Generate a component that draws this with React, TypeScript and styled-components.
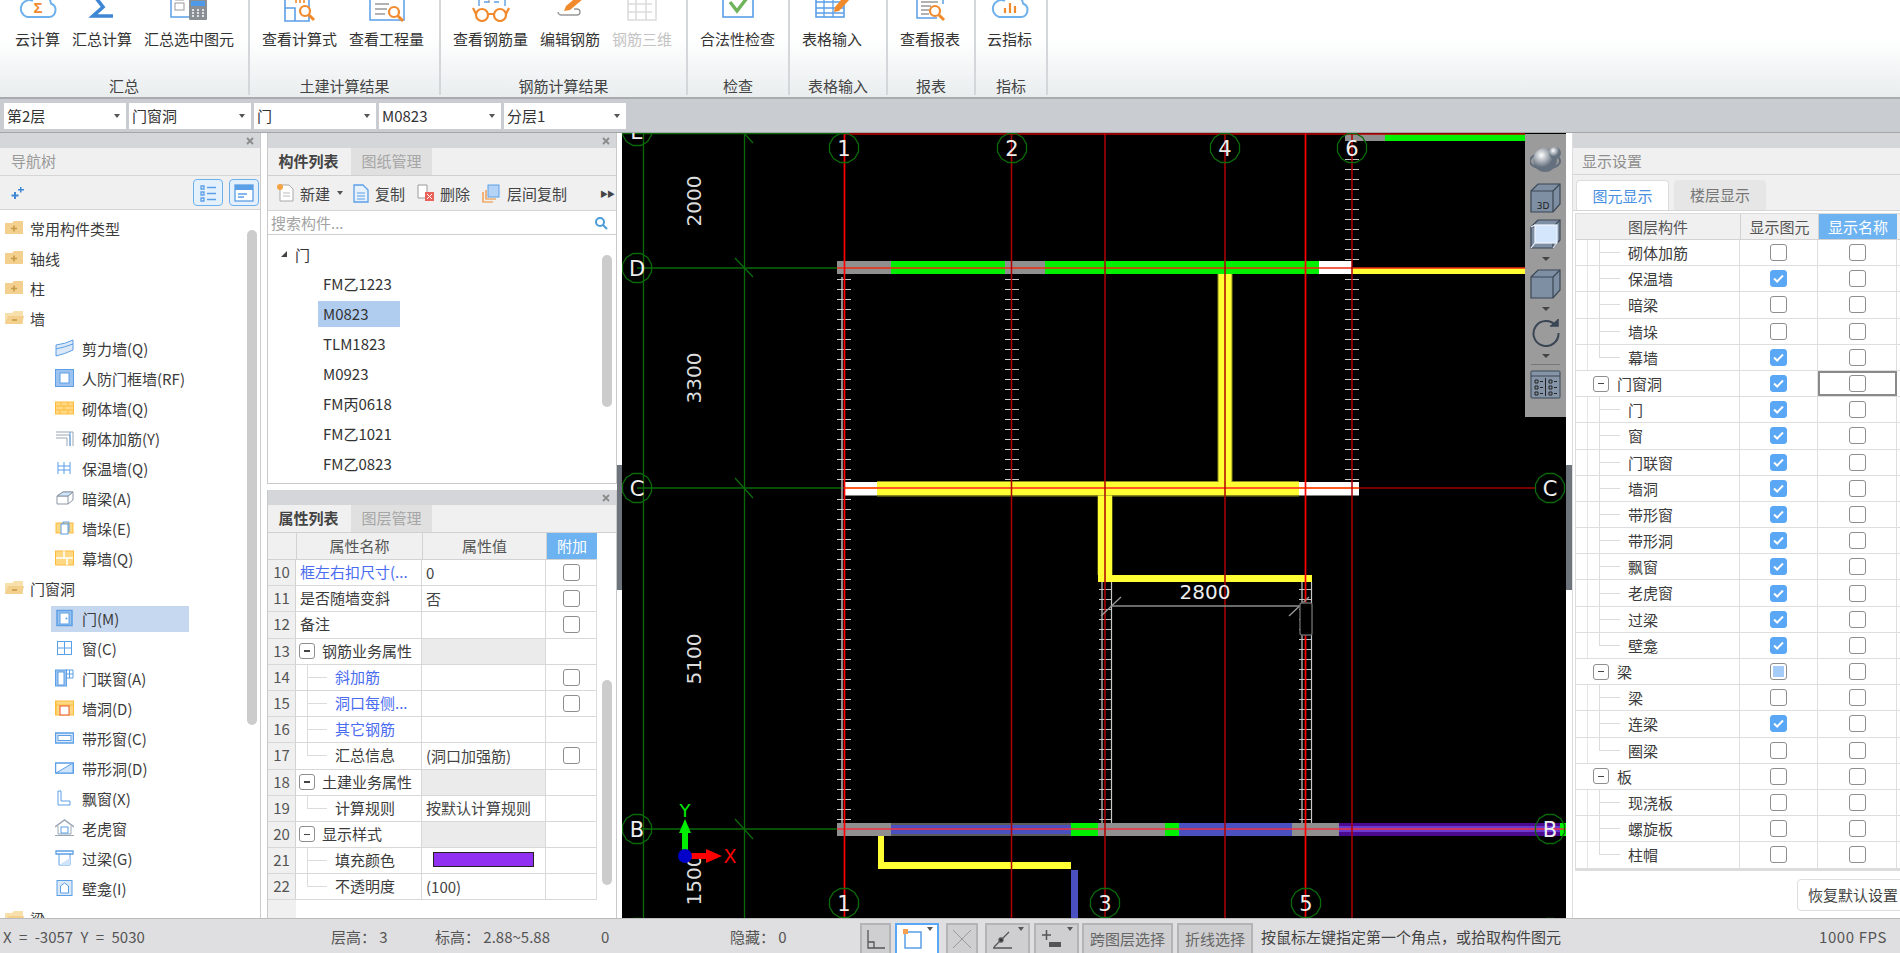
import React from "react";
import styled, { createGlobalStyle } from "styled-components";

const Global = createGlobalStyle`
  html, body { margin: 0; padding: 0; background: #fff; overflow: hidden; }
  body { font-family: "Noto Sans CJK SC", "Noto Sans", sans-serif; font-size: 15px; color: #333; }
  * { box-sizing: border-box; }
`;

const Page = styled.div`
  width: 1900px; height: 953px; display: flex; flex-direction: column; overflow: hidden; background: #fff;
`;

/* ---------- ribbon ---------- */
const Ribbon = styled.div`
  height: 99px; flex: none; display: flex; border-bottom: 2px solid #a9acaf;
  background: linear-gradient(#fff 0, #fff 38px, #e9edee 97px);
`;
const Section = styled.div<{ $w: number }>`
  width: ${p => p.$w}px; height: 95px; flex: none; display: grid; grid-template-rows: 77px 18px;
  border-right: 2px solid #d3d7d9;
`;
const Items = styled.div<{ $pad: number }>`
  display: flex; gap: 12px; padding-left: ${p => p.$pad}px;
`;
const Item = styled.div<{ $off?: boolean }>`
  display: flex; flex-direction: column; align-items: center; color: ${p => (p.$off ? "#c4c4c4" : "#333")};
`;
const IconZone = styled.div`
  height: 22px; width: 40px; overflow: hidden; display: flex; align-items: flex-end; justify-content: center; margin-bottom: 8px;
`;
const ItemLabel = styled.div`
  line-height: 18px; white-space: nowrap;
`;
const SectionTitle = styled.div`
  text-align: center; line-height: 18px; color: #444;
`;

/* ---------- selector bar ---------- */
const SelectBar = styled.div`
  height: 34px; flex: none; display: flex; gap: 3px; padding: 4px 0 0 4px; background: #c9ccd1;
  border-bottom: 1px solid #a4a6a9;
`;
const Select = styled.div`
  width: 122px; height: 26px; background: #fff; display: flex; align-items: center; justify-content: space-between;
  padding: 0 6px 0 3px; color: #333; line-height: 26px;
`;
const Caret = styled.span<{ $ml?: number }>`
  width: 0; height: 0; margin-left: ${p => p.$ml ?? 0}px; border-left: 3.5px solid transparent; border-right: 3.5px solid transparent; border-top: 4px solid #555;
`;

/* ---------- main ---------- */
const Main = styled.div`
  height: 785px; flex: none; display: flex;
`;
const Strip = styled.div`
  height: 15px; flex: none; background: #d5d6da; display: flex; justify-content: flex-end; align-items: center;
  padding-right: 5px;
`;
const CloseX = () => (
  <svg width="10" height="10" viewBox="0 0 10 10" fill="none" stroke="#8b8b8b" strokeWidth="1.800"><path d="M2 2L8 8M8 2L2 8" /></svg>
);
const LeftPanel = styled.div`
  width: 261px; flex: none; display: flex; flex-direction: column; border-right: 1px solid #ccc;
`;
const Title = styled.div`
  height: 28px; flex: none; background: #f0f0f0; color: #9a9a9a; padding-left: 11px; line-height: 26px; border-bottom: 1px solid #d5d5d5;
`;
const NavTools = styled.div`
  height: 34px; flex: none; background: #f0f0f0; display: flex; align-items: center; gap: 6px; padding: 0 1px 0 9px;
  border-bottom: 1px solid #d5d5d5;
`;
const Spacer = styled.div`
  flex: 1;
`;
const ToggleBtn = styled.div`
  width: 30px; height: 27px; background: #e4f1fd; border: 1px solid #6db0ee; border-radius: 4px; display: flex; align-items: center; justify-content: center;
`;
const NavTree = styled.div`
  flex: 1; position: relative; overflow: hidden; padding-top: 3px;
`;
const NavThumb = styled.div`
  position: absolute; left: 247px; top: 20px; width: 10px; height: 495px; background: #ccc; border-radius: 5px;
`;
const NavRow = styled.div<{ $child?: boolean }>`
  height: 30px; display: flex; align-items: center; padding-left: ${p => (p.$child ? 55 : 5)}px; gap: ${p => (p.$child ? 8 : 6)}px; color: #3c3c3c; white-space: nowrap;
`;
const NavSel = styled.div`
  position: absolute; left: 51px; top: 396px; width: 138px; height: 26px; background: #c6d8ef;
`;
const NavIconBox = styled.span`
  width: 19px; height: 18px; flex: none; display: flex; position: relative;
`;
const NavText = styled.span`
  position: relative;
`;
const Gap = styled.div<{ $w: number }>`
  width: ${p => p.$w}px; flex: none; background: #fff; position: relative;
`;
const Handle = styled.div`
  position: absolute; left: 0; right: 0; top: 332px; height: 125px; background: #6d747c;
`;
const MiddleCol = styled.div`
  width: 350px; flex: none; display: flex; flex-direction: column;
`;
const ListPanel = styled.div`
  height: 351px; flex: none; display: flex; flex-direction: column; border: 1px solid #c9c9c9; border-top: 0;
`;
const Divider = styled.div`
  height: 6px; flex: none; background: #fff;
`;
const PropPanel = styled.div`
  flex: 1; display: flex; flex-direction: column; border-right: 1px solid #c9c9c9; border-left: 1px solid #c9c9c9; position: relative; overflow: hidden;
`;
const TabBar = styled.div`
  height: 28px; flex: none; background: #f0f0f0; display: flex; border-bottom: 1px solid #d0d0d0;
`;
const Tab = styled.div<{ $on?: boolean }>`
  width: 81px; margin-right: 2px; text-align: center; line-height: 26px; font-weight: ${p => (p.$on ? 700 : 400)};
  color: ${p => (p.$on ? "#444" : "#a6a6a6")}; background: ${p => (p.$on ? "#f0f0f0" : "#e0e0e0")};
`;
const ListTools = styled.div`
  height: 35px; flex: none; background: #f0f0f0; display: flex; align-items: center; padding-left: 9px; border-bottom: 1px solid #d5d5d5; color: #444;
`;
const ToolText = styled.span<{ $ml: number; $w: number }>`
  margin-left: ${p => p.$ml}px; width: ${p => p.$w}px; flex: none; white-space: nowrap;
`;
const ToolIcon = styled.span<{ $ml: number }>`
  margin-left: ${p => p.$ml}px; display: flex;
`;
const More = styled.span`
  margin-left: 33px; font-size: 8px; color: #444; letter-spacing: -1px;
`;
const Search = styled.div`
  height: 24px; flex: none; display: flex; align-items: center; justify-content: space-between; padding: 0 8px 0 3px; color: #a3a3a3;
  border-bottom: 1px solid #cfcfcf; background: #fff;
`;
const ListTree = styled.div`
  flex: 1; position: relative; padding-top: 4px; overflow: hidden;
`;
const ListRoot = styled.div`
  height: 30px; display: flex; align-items: center; gap: 8px; padding-left: 13px; color: #333;
`;
const RootArrow = styled.span`
  width: 0; height: 0; border-left: 6px solid transparent; border-bottom: 6px solid #444;
`;
const ListRow = styled.div`
  height: 30px; display: flex; align-items: center; padding-left: 55px; color: #333;
`;
const ListLabel = styled.span<{ $sel?: boolean }>`
  width: ${p => (p.$sel ? "82px" : "auto")}; height: 26px; line-height: 26px; margin-left: -5px; padding-left: 5px;
  background: ${p => (p.$sel ? "#b0cdf0" : "transparent")};
`;
const ListThumb = styled.div`
  position: absolute; left: 334px; top: 20px; width: 10px; height: 152px; background: #ccc; border-radius: 5px;
`;
const PropTable = styled.div`
  display: flex; flex-direction: column; width: 329px; border-right: 1px solid #dcdcdc;
`;
const PropHead = styled.div`
  display: grid; grid-template-columns: 28px 126px 124px 51px; height: 27px; flex: none; background: #f0f0f0; text-align: center; line-height: 25px; color: #555;
  border-bottom: 1px solid #d2d2d2;
`;
const HeadCell = styled.div<{ $on?: boolean }>`
  border-left: 1px solid #d2d2d2; background: ${p => (p.$on ? "#6db3f2" : "transparent")}; color: ${p => (p.$on ? "#fff" : "#555")};
  &:first-child { border-left: 0; }
`;
const PropRow = styled.div`
  display: grid; grid-template-columns: 28px 126px 124px 51px; height: 26.2px; flex: none; border-bottom: 1px solid #d8d8d8; line-height: 24px;
`;
const NumCell = styled.div`
  background: #f0f0f0; text-align: center; color: #555; border-right: 1px solid #d2d2d2;
`;
const NameCell = styled.div`
  display: flex; align-items: stretch; border-right: 1px solid #d8d8d8; white-space: nowrap; overflow: hidden;
`;
const ValueCell = styled.div<{ $shade?: boolean }>`
  background: ${p => (p.$shade ? "#ebebeb" : "#fff")}; border-right: 1px solid #d8d8d8; padding-left: 4px; display: flex; align-items: center; white-space: nowrap; color: #444;
`;
const AddCell = styled.div`
  display: flex; align-items: center; justify-content: center;
`;
const PropName = styled.span<{ $link?: boolean; $ml: number }>`
  margin-left: ${p => p.$ml}px; color: ${p => (p.$link ? "#4a6cf0" : "#3c3c3c")};
`;
const Guide = styled.span<{ $ml: number; $last?: boolean; $w: number }>`
  width: ${p => p.$w}px; margin-left: ${p => p.$ml}px; flex: none;
  background:
    linear-gradient(#dcdcdc, #dcdcdc) left top / 1px ${p => (p.$last ? "50%" : "100%")} no-repeat,
    linear-gradient(#dcdcdc, #dcdcdc) left center / 100% 1px no-repeat;
`;
const Minus = styled.span<{ $ml: number }>`
  width: 16px; height: 16px; margin-left: ${p => p.$ml}px; align-self: center; flex: none; border: 1px solid #8f8f8f; border-radius: 3px; background: #fff;
  display: flex; align-items: center; justify-content: center;
  &::before { content: ""; width: 6px; height: 1.5px; background: #444; }
`;
const Swatch = styled.span`
  width: 101px; height: 15px; margin-left: 7px; margin-top: -2px; background: #9030f0; border: 1.5px solid #222;
`;
const PropFill = styled.div`
  flex: 1; width: 28px; background: #f0f0f0;
`;
const PropThumb = styled.div`
  position: absolute; left: 334px; top: 190px; width: 10px; height: 205px; background: #ccc; border-radius: 5px;
`;

const Box = styled.span<{ $state: "off" | "on" | "mixed" }>`
  width: 17px; height: 17px; flex: none; border-radius: 3px; display: flex; align-items: center; justify-content: center;
  border: 1.5px solid ${p => (p.$state === "on" ? "#5aa7f5" : "#8e8e8e")};
  background: ${p => (p.$state === "on" ? "#5aa7f5" : "#fff")};
  box-shadow: ${p => (p.$state === "mixed" ? "inset 0 0 0 2px #fff, inset 0 0 0 9px #a5cbf8" : "none")};
`;

/* ---------- canvas ---------- */
const CanvasWrap = styled.div`
  width: 944px; flex: none; position: relative; background: #000; overflow: hidden;
`;
const CanvasSvg = styled.svg`
  display: block;
`;
const ViewBar = styled.div`
  position: absolute; right: 0; top: 1px; width: 41px; height: 283px; background: #9b9b9b; display: flex; flex-direction: column; align-items: center; padding-top: 11px;
`;
const ViewIcon = styled.div<{ $mt?: number }>`
  height: 30px; margin-top: ${p => p.$mt ?? 0}px; display: flex;
`;
const ViewCaret = styled.span<{ $mt: number }>`
  width: 0; height: 0; margin-top: ${p => p.$mt}px; border-left: 4px solid transparent; border-right: 4px solid transparent; border-top: 4px solid #444;
`;
const ViewRule = styled.div`
  width: 29px; height: 1px; background: #777; margin-top: 6px;
`;

/* ---------- right panel ---------- */
const RightPanel = styled.div`
  width: 328px; flex: none; display: flex; flex-direction: column; overflow: hidden; background: #fff; border-left: 1px solid #ddd;
`;
const RightTitle = styled.div`
  height: 27px; flex: none; background: #f0f0f0; color: #8e8e8e; padding-left: 9px; line-height: 26px; border-bottom: 1px solid #d5d5d5;
`;
const RTabs = styled.div`
  height: 36px; flex: none; padding: 5px 0 0 3px; display: flex; gap: 5px; border-bottom: 1px solid #d5d5d5; background: #f0f0f0;
`;
const RTab = styled.div<{ $on?: boolean }>`
  width: ${p => (p.$on ? 93 : 92)}px; text-align: center; line-height: 30px; border-radius: 4px 4px 0 0;
  background: ${p => (p.$on ? "#fff" : "#e6e6e6")}; color: ${p => (p.$on ? "#4a90e2" : "#777")};
  border: ${p => (p.$on ? "1px solid #dcdcdc" : "0")}; border-bottom: 0;
`;
const RTable = styled.div`
  margin: 2px 0 0 2px; display: flex; flex-direction: column; width: 326px; border: 1px solid #dcdcdc; border-width: 1px 0 2px 1px;
`;
const RHead = styled.div`
  display: grid; grid-template-columns: 164px 78px 79px; height: 26px; background: #f0f0f0; text-align: center; line-height: 25px; color: #555; flex: none;
  border-bottom: 1px solid #d2d2d2;
`;
const RRow = styled.div`
  display: grid; grid-template-columns: 164px 78px 79px; height: 26.2px; flex: none; border-bottom: 1px solid #dedede; line-height: 25px; color: #3c3c3c;
`;
const RName = styled.div<{ $child?: boolean }>`
  display: flex; align-items: stretch; border-right: 1px solid #dedede; white-space: nowrap;
  background: ${p => (p.$child ? "linear-gradient(#e6e6e6,#e6e6e6) 11px 0 / 1px 100% no-repeat" : "none")};
`;
const RCheck = styled.div<{ $focus?: boolean }>`
  display: flex; align-items: center; justify-content: center; border-right: 1px solid #dedede;
  outline: ${p => (p.$focus ? "2px solid #8a8a8a" : "none")}; outline-offset: -2px;
`;
const RestoreRow = styled.div`
  padding: 8px 0 0 224px; flex: none;
`;
const Restore = styled.div`
  width: 140px; height: 32px; border: 1px solid #dedede; border-radius: 4px; padding-left: 10px; line-height: 29px; color: #444; white-space: nowrap;
`;

/* ---------- status bar ---------- */
const Status = styled.div`
  height: 35px; flex: none; background: #dfdfe1; display: flex; align-items: center; color: #555; border-top: 1px solid #bcbcbe; white-space: nowrap;
`;
const StatusCell = styled.div<{ $w: number; $ml?: number; $wide?: boolean }>`
  width: ${p => p.$w}px; flex: none; padding-left: ${p => p.$ml ?? 0}px; word-spacing: ${p => (p.$wide ? "4px" : "0")};
`;
const StatusBtns = styled.div`
  display: flex; align-self: flex-end; height: 30px;
`;
const SBtn = styled.div<{ $w: number; $ml: number; $on?: boolean }>`
  width: ${p => p.$w}px; margin-left: ${p => p.$ml}px; height: 32px; flex: none; display: flex; align-items: flex-start; justify-content: center; gap: 5px; padding-top: 2px; line-height: 23px;
  background: ${p => (p.$on ? "#fff" : "#cfcfd1")}; border: 2px solid ${p => (p.$on ? "#5aa7f5" : "#b4b4b6")}; color: #666;
`;
const Hint = styled.div`
  margin-left: 8px; width: 300px; color: #444; flex: none;
`;
const Fps = styled.div`
  margin-left: 258px; color: #555; letter-spacing: 0.6px;
`;

/* ---------- icon helpers ---------- */
const blue = "#5b9fe6";
const lblue = "#cfe3fa";
const org = "#f08a2c";

const RIcon = ({ children, w = 40 }: { children: React.ReactNode; w?: number }) => (
  <svg width={w} height={32} viewBox={`0 0 ${w} 32`} fill="none" style={{ flex: "none" }}>{children}</svg>
);
const Cloud = () => <path d="M9 27 H31 a7 7 0 0 0 2-13.5 a10 10 0 0 0-19-3 a8 8 0 0 0-5 16.500 z" stroke="#6fb1ec" strokeWidth="2" fill="#fff" />;
const Lens = ({ x, y }: { x: number; y: number }) => (
  <g stroke={org} strokeWidth="2.2"><circle cx={x} cy={y} r="5" fill="#fff" /><path d={`M${x + 4} ${y + 4} l5 5`} strokeWidth="3" /></g>
);
const ribbonIcons: Record<string, React.ReactNode> = {
  cloudcalc: <RIcon><Cloud /><text x="20" y="23" fontSize="15" fontWeight="700" fill={org} textAnchor="middle" fontFamily="Liberation Sans">Σ</text></RIcon>,
  sum: <RIcon><path d="M10 2 H30 M11 4 L21 17 L11 26 H31" stroke="#3f87d4" strokeWidth="3.6" /></RIcon>,
  select: <RIcon><rect x="2" y="1" width="30" height="26" stroke={blue} strokeWidth="1.5" fill="#fff" /><rect x="6" y="13" width="9" height="7" stroke="#999" /><path d="M6 10h9" stroke="#999" /><rect x="20" y="8" width="18" height="22" rx="1" fill="#8a8f96" /><rect x="22" y="11" width="14" height="5" fill="#4e9ae8" /><path d="M23 20h2m3 0h2m3 0h2M23 23h2m3 0h2m3 0h2M23 26h2m3 0h2m3 0h2" stroke="#fff" strokeWidth="1.5" /></RIcon>,
  formula: <RIcon><path d="M5 8 V31 H29 V8 Z M5 18 H15 V31" stroke={blue} strokeWidth="1.6" fill="#fff" /><path d="M16 10v3m4-3v3m4-3v3" stroke={org} strokeWidth="1.6" /><Lens x={25} y={21} /></RIcon>,
  amount: <RIcon><path d="M3 6 V30 H37 V6" stroke={blue} strokeWidth="1.5" fill="#fff" /><path d="M8 14h14M8 19h12M8 24h10" stroke="#999" strokeWidth="1.5" /><Lens x={27} y={22} /></RIcon>,
  glasses: <RIcon><path d="M8 6 V16 M34 6 V16 M13 12 H18 M23 12 H28" stroke={blue} strokeWidth="1.4" /><path d="M18 5v8m-3-4h6" stroke="#888" /><g stroke={org} strokeWidth="2.2" fill="#fff"><circle cx="11" cy="25" r="6" /><circle cx="29" cy="25" r="6" /><path d="M17 24h6M5 24 L2 18M35 24 L38 18" /></g></RIcon>,
  edit: <RIcon><path d="M8 22 a3.500 3.500 0 0 0 3 3 H27 a3 3 0 0 0 0-6 H24" stroke="#999" strokeWidth="1.4" /><path d="M14 21 L16 16 L29 5 L33 9 L20 20 Z" fill={org} /></RIcon>,
  threeD: <RIcon><path d="M6 4 V30 H34 V4 M6 14 H30 M6 22 H30 M14 4 V30 M24 4 V30" stroke="#dcdcdc" strokeWidth="1.6" /></RIcon>,
  check: <RIcon><rect x="5" y="3" width="30" height="24" stroke={blue} strokeWidth="1.6" fill="#fff" /><path d="M12 12 L19 21 L32 4" stroke="#6fb35a" strokeWidth="3.4" /></RIcon>,
  table: <RIcon><rect x="4" y="4" width="28" height="23" fill="#fff" stroke={blue} strokeWidth="1.6" /><path d="M4 12h28M4 18h28M4 23h28M12 8v19M21 8v19" stroke={blue} strokeWidth="1.3" /><path d="M22 22 L23 17 L34 4 L39 8 L27 21 Z" fill={org} /></RIcon>,
  report: <RIcon><path d="M7 6 V28 H27 M33 6 V14" stroke={blue} strokeWidth="1.5" /><path d="M11 12h17M11 16h10M11 20h8M11 24h8" stroke="#999" strokeWidth="1.5" /><Lens x={25} y={21} /></RIcon>,
  cloudbar: <RIcon><Cloud /><path d="M15 23v-5M20 23V13M25 23v-7" stroke={org} strokeWidth="2.2" /></RIcon>,
};

const Tree = ({ children }: { children: React.ReactNode }) => (
  <svg width="19" height="18" viewBox="0 0 19 18" fill="none">{children}</svg>
);
const Y = "#fdbb3c";
const B = "#5b9fe6";
const navIcons: Record<string, React.ReactNode> = {
  shear: <Tree><path d="M1 6 Q10 5 18 1 V11 Q10 15 1 17 Z" fill="#dbe8f8" stroke={B} /><path d="M1 10 Q10 8 18 5" stroke={B} /></Tree>,
  frame: <Tree><rect x="0.500" y="0.500" width="18" height="17" fill="#9cc3ef" stroke={B} /><rect x="5" y="4" width="9" height="10" fill="#fff" stroke={B} /></Tree>,
  brick: <Tree><rect x="0.500" y="3" width="18" height="12" fill="#ffd884" stroke={Y} /><path d="M1 7h18M1 11h18M6 3v4M13 3v4M9 7v4M5 11v4M13 11v4" stroke={Y} /></Tree>,
  rebar: <Tree><path d="M1 3H18V17M1 6H15V17M1 9H12V17" stroke="#9aa6b3" /><path d="M15 3V17" stroke={B} /></Tree>,
  insul: <Tree><path d="M3 3V15M9 3V15M15 3V15M3 7H15M3 11H15" stroke={B} /></Tree>,
  hidden: <Tree><path d="M2 7 L8 3 H18 V11 L13 15 H2 Z M2 7 H13 V15 M13 7 L18 3" stroke="#8d97a3" fill="#fff" /><path d="M8 3H18L13 7H2Z" fill={lblue} stroke="#8d97a3" /></Tree>,
  pier: <Tree><rect x="1" y="4" width="17" height="10" fill="#ffd884" stroke={Y} /><rect x="6" y="5" width="7" height="10" fill="#fff" stroke={B} /><path d="M8 5V3H14V13" stroke={B} /></Tree>,
  curtain: <Tree><rect x="0.500" y="2" width="18" height="14" fill="#ffd884" stroke={Y} /><path d="M1 9H18M9 2V9M12 9V16" stroke="#fff" strokeWidth="1.500" /></Tree>,
  door: <Tree><rect x="2" y="1.500" width="15" height="15" fill="#9cc3ef" stroke={B} strokeWidth="1.500" /><rect x="5" y="4" width="9" height="11" fill="#fff" stroke={B} /><circle cx="11.500" cy="9.500" r="1" fill={B} /></Tree>,
  win: <Tree><rect x="2.500" y="2.500" width="14" height="13" fill="#fff" stroke={B} /><path d="M9.500 3V15M3 9H16" stroke={B} /></Tree>,
  doorwin: <Tree><rect x="0.500" y="1" width="11" height="16" fill="#9cc3ef" stroke={B} /><rect x="3" y="3" width="6" height="13" fill="#fff" stroke={B} /><path d="M11 1H18V9H11M14.500 1V9M11 5H18" stroke={B} /></Tree>,
  hole: <Tree><rect x="0.500" y="2" width="18" height="14" fill="#ffd884" stroke={Y} /><path d="M1 6H18M1 2V16" stroke={Y} /><rect x="5" y="7" width="9" height="9" fill="#fff" stroke="#e8562a" /></Tree>,
  strip: <Tree><rect x="0.500" y="4" width="18" height="10" fill="#dbe8f8" stroke={B} strokeWidth="1.500" /><rect x="3" y="6.500" width="13" height="5" fill="#fff" stroke={B} /></Tree>,
  striphole: <Tree><rect x="0.500" y="4" width="18" height="10" fill="#fff" stroke={B} strokeWidth="1.500" /><path d="M1 14 L18 4 V14 Z" fill={lblue} stroke={B} /></Tree>,
  bay: <Tree><path d="M3 2 H6 V12 H15 V16 H3 Z" fill="#fff" stroke={B} /></Tree>,
  dormer: <Tree><path d="M0 8 L9.500 1 L19 8" stroke="#9aa6b3" strokeWidth="1.500" /><path d="M3 7 V15 H16 V7" stroke="#9aa6b3" /><rect x="6" y="8" width="7" height="6" stroke={B} fill="#fff" /><path d="M0 16.500 H19" stroke="#9aa6b3" /></Tree>,
  lintel: <Tree><path d="M1 2 H18 V5 H1 Z" fill="#fff" stroke={B} strokeWidth="1.300" /><path d="M4 5 V16 H15 V5" stroke={B} /><path d="M4 16 L15 9 V16 Z" fill={lblue} /></Tree>,
  niche: <Tree><rect x="2" y="1.500" width="15" height="15" fill="#dbe8f8" stroke={B} /><path d="M5.500 14 V7 L9.500 4 L13.500 7 V14 Z" fill="#fff" stroke={B} /></Tree>,
};
const Folder = ({ open }: { open?: boolean }) => (
  <svg width="19" height="18" viewBox="0 0 19 18" fill="none">
    <path d="M0 4 H7 L9 2 H18 V15 H0 Z" fill={open ? "#f8e0ac" : "#f3d08e"} />
    {open && <path d="M0 15 L3 7 H19 L17 15 Z" fill="#f3d08e" />}
    <path d={open ? "M7 11 H12" : "M6 9.500 H12 M9 6.500 V12.500"} stroke="#c79a46" strokeWidth="1.600" />
  </svg>
);

/* ---------- data ---------- */
const ribbon = [
  { w: 250, pad: 15, title: "汇总", items: [["云计算", "cloudcalc"], ["汇总计算", "sum"], ["汇总选中图元", "select"]] },
  { w: 191, pad: 12, title: "土建计算结果", items: [["查看计算式", "formula"], ["查看工程量", "amount"]] },
  { w: 247, pad: 12, title: "钢筋计算结果", items: [["查看钢筋量", "glasses"], ["编辑钢筋", "edit"], ["钢筋三维", "threeD"]] },
  { w: 102, pad: 12, title: "检查", items: [["合法性检查", "check"]] },
  { w: 98, pad: 12, title: "表格输入", items: [["表格输入", "table"]] },
  { w: 88, pad: 12, title: "报表", items: [["查看报表", "report"]] },
  { w: 72, pad: 11, title: "指标", items: [["云指标", "cloudbar"]] },
];
const navData: [string, string | null, boolean?][] = [
  ["常用构件类型", null], ["轴线", null], ["柱", null], ["墙", null, true],
  ["剪力墙(Q)", "shear"], ["人防门框墙(RF)", "frame"], ["砌体墙(Q)", "brick"], ["砌体加筋(Y)", "rebar"], ["保温墙(Q)", "insul"],
  ["暗梁(A)", "hidden"], ["墙垛(E)", "pier"], ["幕墙(Q)", "curtain"], ["门窗洞", null, true],
  ["门(M)", "door"], ["窗(C)", "win"], ["门联窗(A)", "doorwin"], ["墙洞(D)", "hole"], ["带形窗(C)", "strip"], ["带形洞(D)", "striphole"],
  ["飘窗(X)", "bay"], ["老虎窗", "dormer"], ["过梁(G)", "lintel"], ["壁龛(I)", "niche"], ["梁", null, true],
];
type P = { n: number; name: string; kind?: "group" | "child" | "last"; link?: boolean; val?: React.ReactNode; chk?: boolean; shade?: boolean };
const props: P[] = [
  { n: 10, name: "框左右扣尺寸(...", link: true, val: "0", chk: true },
  { n: 11, name: "是否随墙变斜", val: "否", chk: true },
  { n: 12, name: "备注", chk: true },
  { n: 13, name: "钢筋业务属性", kind: "group", shade: true },
  { n: 14, name: "斜加筋", kind: "child", link: true, chk: true },
  { n: 15, name: "洞口每侧...", kind: "child", link: true, chk: true },
  { n: 16, name: "其它钢筋", kind: "child", link: true },
  { n: 17, name: "汇总信息", kind: "last", val: "(洞口加强筋)", chk: true },
  { n: 18, name: "土建业务属性", kind: "group", shade: true },
  { n: 19, name: "计算规则", kind: "last", val: "按默认计算规则" },
  { n: 20, name: "显示样式", kind: "group", shade: true },
  { n: 21, name: "填充颜色", kind: "child", val: <Swatch /> },
  { n: 22, name: "不透明度", kind: "last", val: "(100)" },
];
type L = { name: string; kind: "group" | "child" | "last"; st: "off" | "on" | "mixed"; focus?: boolean };
const layers: L[] = [
  { name: "砌体加筋", kind: "child", st: "off" }, { name: "保温墙", kind: "child", st: "on" }, { name: "暗梁", kind: "child", st: "off" },
  { name: "墙垛", kind: "child", st: "off" }, { name: "幕墙", kind: "last", st: "on" },
  { name: "门窗洞", kind: "group", st: "on", focus: true },
  { name: "门", kind: "child", st: "on" }, { name: "窗", kind: "child", st: "on" }, { name: "门联窗", kind: "child", st: "on" }, { name: "墙洞", kind: "child", st: "on" },
  { name: "带形窗", kind: "child", st: "on" }, { name: "带形洞", kind: "child", st: "on" }, { name: "飘窗", kind: "child", st: "on" }, { name: "老虎窗", kind: "child", st: "on" },
  { name: "过梁", kind: "child", st: "on" }, { name: "壁龛", kind: "last", st: "on" },
  { name: "梁", kind: "group", st: "mixed" }, { name: "梁", kind: "child", st: "off" }, { name: "连梁", kind: "child", st: "on" }, { name: "圈梁", kind: "last", st: "off" },
  { name: "板", kind: "group", st: "off" }, { name: "现浇板", kind: "child", st: "off" }, { name: "螺旋板", kind: "child", st: "off" }, { name: "柱帽", kind: "last", st: "off" },
];

const Check = ({ state }: { state: "off" | "on" | "mixed" }) => (
  <Box $state={state}>
    {state === "on" && <svg width="11" height="9" viewBox="0 0 11 9" fill="none"><path d="M1 4.500 L4.200 7.500 L10 1.500" stroke="#fff" strokeWidth="2" /></svg>}
  </Box>
);

/* ---------- canvas drawing, in page coordinates ---------- */
const GREEN = "#0a6a0a";
const poly = (cx: number, cy: number, r = 15) =>
  Array.from({ length: 12 }, (_, i) => {
    const a = (Math.PI / 6) * i + Math.PI / 12;
    return `${(cx + r * Math.cos(a)).toFixed(1)},${(cy + r * Math.sin(a)).toFixed(1)}`;
  }).join(" ");
const Bubble = ({ x, y, t }: { x: number; y: number; t: string }) => (
  <g>
    <polygon points={poly(x, y)} fill="none" stroke={GREEN} strokeWidth="1.3" />
    <text x={x} y={y + 7.5} fontSize="21" fill="#eee" textAnchor="middle" fontFamily="DejaVu Sans">{t}</text>
  </g>
);
const Ticks = ({ x0, x1, from, to, skip }: { x0: number; x1: number; from: number; to: number; skip?: [number, number] }) => {
  const ys: number[] = [];
  for (let y = from; y <= to; y += 10) if (!skip || y < skip[0] || y > skip[1]) ys.push(y);
  return <path d={ys.map(y => `M${x0} ${y}.5H${x1}`).join("")} stroke="#c8c8c8" strokeWidth="1.200" />;
};
const W = ({ x, y, x2, y2, c }: { x: number; y: number; x2: number; y2: number; c: string }) => (
  <rect x={x} y={y} width={x2 - x} height={y2 - y} fill={c} />
);
const Dim = ({ y, t }: { y: number; t: string }) => (
  <text transform={`translate(701 ${y}) rotate(-90)`} fontSize="20" fill="#ddd" textAnchor="middle" fontFamily="DejaVu Sans">{t}</text>
);
const GREY = "#8f8f8f", GR = "#00f000", YEL = "#ffff33", BLU = "#4a50c0", PUR = "#4b0a8f";

const Drawing = () => (
  <CanvasSvg width="944" height="785" viewBox="622 133 944 785">
    {/* green axis lines */}
    <path d="M643.500 133V918M744.500 133V918M622 133.500H844M637 268H837M637 488H844M637 829H837" stroke={GREEN} strokeWidth="1.300" />
    <path d="M735 258L753 277M735 478L753 498M735 819L753 839M744 133L753 143" stroke={GREEN} strokeWidth="1.300" />
    {/* rebar ticks */}
    <rect x="841" y="277" width="2" height="546" fill="#888" />
    <Ticks x0={837} x1={851} from={279} to={819} skip={[481, 496]} />
    <Ticks x0={1005} x1={1019} from={279} to={479} />
    <Ticks x0={1345} x1={1359} from={159} to={259} />
    <Ticks x0={1345} x1={1359} from={279} to={479} />
    <path d="M1102 582V823M1111.500 582V823M1302 582V823M1311.500 582V823" stroke="#c8c8c8" strokeWidth="1.200" />
    <Ticks x0={1099} x1={1112} from={589} to={819} />
    <Ticks x0={1299} x1={1312} from={589} to={819} />
    {/* top wall */}
    <W x={1345} y={134} x2={1385} y2={141} c={GREY} />
    <W x={1385} y={134} x2={1525} y2={141} c={GR} />
    {/* wall D */}
    <W x={837} y={261} x2={891} y2={274} c={GREY} />
    <W x={891} y={261} x2={1005} y2={274} c={GR} />
    <W x={1005} y={261} x2={1045} y2={274} c={GREY} />
    <W x={1045} y={261} x2={1319} y2={274} c={GR} />
    <W x={1319} y={261} x2={1352} y2={274} c="#fff" />
    <W x={1352} y={268} x2={1525} y2={274} c={YEL} />
    <path d="M837 268H1525" stroke="#f02a10" strokeWidth="1.300" />
    {/* yellow walls */}
    <W x={1218} y={274} x2={1232} y2={482} c={YEL} />
    <W x={844} y={482} x2={877} y2={495.500} c="#fff" />
    <W x={877} y={482} x2={1299} y2={495.500} c={YEL} />
    <W x={1299} y={482} x2={1359} y2={495.500} c="#fff" />
    <path d="M877 481.500H1218M1232 481.500H1299M877 496H1098M1112 496H1299M1218 274V482M1232 274V482M1098 496V575M1112 496V575" stroke="#8d8d20" />
    <path d="M844 488H1359" stroke="#ff5a20" strokeWidth="1.800" />
    <W x={1098} y={495.500} x2={1112} y2={582} c={YEL} />
    <W x={1098} y={575} x2={1312} y2={582} c={YEL} />
    {/* wall B */}
    <W x={837} y={823} x2={891} y2={836} c={GREY} />
    <W x={891} y={823} x2={1071} y2={836} c="#5c5c5c" />
    <W x={891} y={825} x2={1071} y2={834} c={BLU} />
    <W x={1071} y={823} x2={1098} y2={836} c={GR} />
    <W x={1098} y={823} x2={1165} y2={836} c={GREY} />
    <W x={1165} y={823} x2={1179} y2={836} c={GR} />
    <W x={1179} y={823} x2={1292} y2={836} c={BLU} />
    <W x={1292} y={823} x2={1339} y2={836} c={GREY} />
    <W x={1339} y={823} x2={1560} y2={836} c={PUR} />
    <W x={1339} y={826} x2={1560} y2={832} c="#6a3ad0" />
    <W x={1560} y={823} x2={1566} y2={836} c={GR} />
    <path d="M837 829H1566" stroke="#f03040" strokeWidth="1.300" />
    {/* lower walls */}
    <W x={878} y={836} x2={884} y2={869} c={YEL} />
    <W x={878} y={862} x2={1071} y2={869} c={YEL} />
    <W x={1071} y={870} x2={1078} y2={918} c={BLU} />
    {/* axes */}
    <path d="M844.500 133V918M1305.500 133V918" stroke="#ff0000" strokeWidth="1.700" />
    <path d="M1011.500 133V918M1105 133V918M1225 133V918M1352 133V918" stroke="#b00000" strokeWidth="1.500" />
    <path d="M844 134H1525" stroke="#c00000" strokeWidth="1.500" />
    <path d="M1359 488H1536" stroke="#a00000" strokeWidth="1.300" />
    {/* dims */}
    <Dim y={201} t="2000" />
    <Dim y={378} t="3300" />
    <Dim y={659} t="5100" />
    <Dim y={880} t="1500" />
    <text x="1205" y="599" fontSize="20" fill="#eee" textAnchor="middle" fontFamily="DejaVu Sans">2800</text>
    <path d="M1112 606H1300" stroke="#8c8c8c" strokeWidth="1.500" />
    <path d="M1101 616L1121 597M1289 616L1309 597" stroke="#9a9a9a" strokeWidth="1.300" />
    <rect x="1300" y="603" width="12" height="32" rx="2" fill="#000" stroke="#666" strokeWidth="1.400" />
    {/* bubbles */}
    {([[844, 148, "1"], [1012, 148, "2"], [1225, 148, "4"], [1352, 148, "6"], [844, 903, "1"], [1105, 903, "3"], [1306, 903, "5"],
      [637, 131, "E"], [637, 268, "D"], [637, 488, "C"], [637, 829, "B"], [637, 933, ""], [1550, 488, "C"], [1550, 829, "B"], [1550, 933, ""]] as [number, number, string][]).map(([x, y, t], i) => (
      <Bubble key={i} x={x} y={y} t={t} />
    ))}
    {/* origin */}
    <path d="M685 856V826" stroke="#00ee00" strokeWidth="6" />
    <path d="M685 819L679 833H691Z" fill="#00ee00" />
    <path d="M685 856H712" stroke="#ff0000" strokeWidth="6" />
    <path d="M722 856L706 849V863Z" fill="#ff0000" />
    <circle cx="685" cy="856" r="7" fill="#0000c8" />
    <text x="685" y="817" fontSize="18" fill="#00ee00" textAnchor="middle" fontFamily="DejaVu Sans">Y</text>
    <text x="730" y="863" fontSize="19" fill="#ff0000" textAnchor="middle" fontFamily="DejaVu Sans">X</text>
  </CanvasSvg>
);

const Cube = ({ face, label }: { face: string; label?: string }) => (
  <svg width="31" height="30" viewBox="0 0 31 30" fill="none" stroke="#3a4654" strokeWidth="1.200">
    <path d="M1 8 L8 1 H30 V21 L23 29 H1 Z" fill="#7f8fa3" />
    <path d="M1 8 H23 V29 M23 8 L30 1" />
    {face !== "none" && <><rect x="5" y="6" width="22" height="18" fill={face} stroke="#eef5ff" /><path d="M1 29 L5 24 M23 29 L27 24 M1 8 L5 6" stroke="#eef5ff" /></>}
    {label && <text x="13" y="26" fontSize="9" fill="#222" stroke="none" textAnchor="middle" fontFamily="DejaVu Sans">{label}</text>}
  </svg>
);

const App = () => (
  <>
    <Global />
    <Page>
      <Ribbon>
        {ribbon.map(s => (
          <Section key={s.title} $w={s.w}>
            <Items $pad={s.pad}>
              {s.items.map(([label, ic]) => (
                <Item key={label} $off={ic === "threeD"}>
                  <IconZone>{ribbonIcons[ic]}</IconZone>
                  <ItemLabel>{label}</ItemLabel>
                </Item>
              ))}
            </Items>
            <SectionTitle>{s.title}</SectionTitle>
          </Section>
        ))}
      </Ribbon>
      <SelectBar>
        {["第2层", "门窗洞", "门", "M0823", "分层1"].map(t => (
          <Select key={t}>{t}<Caret /></Select>
        ))}
      </SelectBar>
      <Main>
        <LeftPanel>
          <Strip><CloseX /></Strip>
          <Title>导航树</Title>
          <NavTools>
            <svg width="16" height="16" viewBox="0 0 16 16" fill="#3f87d4"><path d="M5 7h2v2.500h2.500v2H7V14H5v-2.500H2.500v-2H5zM11 2h1.500v2H15v1.500h-2.500v2H11v-2H9V4h2z" /></svg>
            <Spacer />
            <ToggleBtn><svg width="18" height="18" viewBox="0 0 18 18" fill="none" stroke="#5b9fe6" strokeWidth="1.300"><path d="M2 2h3v3H2zM2 8h3v3H2zM2 14h3v3H2zM8 3.500h9M8 9.500h9M8 15.500h9" /></svg></ToggleBtn>
            <ToggleBtn><svg width="20" height="18" viewBox="0 0 20 18" fill="none"><rect x="1" y="1" width="18" height="16" fill="#fff" stroke="#5b9fe6" strokeWidth="1.300" /><rect x="1" y="1" width="18" height="5" fill="#5b9fe6" /><path d="M4 10h9M4 13h6" stroke="#5b9fe6" strokeWidth="1.300" /></svg></ToggleBtn>
          </NavTools>
          <NavTree>
            <NavSel />
            <NavThumb />
            {navData.map(([label, icon, open], i) => (
              <NavRow key={i} $child={!!icon}>
                <NavIconBox>{icon ? navIcons[icon] : <Folder open={open} />}</NavIconBox>
                <NavText>{label}</NavText>
              </NavRow>
            ))}
          </NavTree>
        </LeftPanel>
        <Gap $w={6} />
        <MiddleCol>
          <ListPanel>
            <Strip><CloseX /></Strip>
            <TabBar><Tab $on>构件列表</Tab><Tab>图纸管理</Tab></TabBar>
            <ListTools>
              <svg width="17" height="20" viewBox="0 0 17 20" fill="none"><path d="M3 2H12L16 6V18H3Z" fill="#fff" stroke="#a9a9a9" /><path d="M6 10h7M6 13h7" stroke="#bbb" /><circle cx="3" cy="4" r="3" fill="#f5a441" /></svg>
              <ToolText $ml={6} $w={30}>新建</ToolText>
              <Caret $ml={7} />
              <ToolIcon $ml={10}><svg width="16" height="19" viewBox="0 0 16 19" fill="none"><path d="M1 1H10L15 6V18H1Z" fill="#e6f1fc" stroke="#5b9fe6" strokeWidth="1.300" /><path d="M4 9h8M4 12h8M4 15h8" stroke="#5b9fe6" /></svg></ToolIcon>
              <ToolText $ml={6} $w={30}>复制</ToolText>
              <ToolIcon $ml={12}><svg width="18" height="18" viewBox="0 0 18 18" fill="none"><path d="M1 1H10V14H1Z" fill="#fff" stroke="#9a9a9a" /><rect x="8" y="8" width="9" height="9" fill="#e8635a" /><path d="M10 10l5 5m0-5l-5 5" stroke="#fff" /></svg></ToolIcon>
              <ToolText $ml={5} $w={30}>删除</ToolText>
              <ToolIcon $ml={12}><svg width="18" height="19" viewBox="0 0 18 19" fill="none"><path d="M1 8V18H11M4 6V15H14" stroke={org} strokeWidth="1.200" /><rect x="6" y="1" width="11" height="12" fill="#b5d3f7" stroke="#5b9fe6" /></svg></ToolIcon>
              <ToolText $ml={7} $w={60}>层间复制</ToolText>
              <More>▶▶</More>
            </ListTools>
            <Search>
              搜索构件...
              <svg width="14" height="14" viewBox="0 0 14 14" fill="none" stroke="#4a9bd8" strokeWidth="2"><circle cx="6" cy="6" r="4" /><path d="M9 9l4 4" /></svg>
            </Search>
            <ListTree>
              <ListThumb />
              <ListRoot><RootArrow />门</ListRoot>
              {["FM乙1223", "M0823", "TLM1823", "M0923", "FM丙0618", "FM乙1021", "FM乙0823"].map(t => (
                <ListRow key={t}><ListLabel $sel={t === "M0823"}>{t}</ListLabel></ListRow>
              ))}
            </ListTree>
          </ListPanel>
          <Divider />
          <PropPanel>
            <Strip><CloseX /></Strip>
            <TabBar><Tab $on>属性列表</Tab><Tab>图层管理</Tab></TabBar>
            <PropThumb />
            <PropTable>
              <PropHead><HeadCell /><HeadCell>属性名称</HeadCell><HeadCell>属性值</HeadCell><HeadCell $on>附加</HeadCell></PropHead>
              {props.map(p => (
                <PropRow key={p.n}>
                  <NumCell>{p.n}</NumCell>
                  <NameCell>
                    {p.kind === "group" && <Minus $ml={3} />}
                    {(p.kind === "child" || p.kind === "last") && <Guide $ml={11} $w={20} $last={p.kind === "last"} />}
                    <PropName $link={p.link} $ml={p.kind === "group" ? 7 : p.kind ? 8 : 4}>{p.name}</PropName>
                  </NameCell>
                  <ValueCell $shade={p.shade}>{p.val}</ValueCell>
                  <AddCell>{p.chk && <Check state="off" />}</AddCell>
                </PropRow>
              ))}
            </PropTable>
            <PropFill />
          </PropPanel>
        </MiddleCol>
        <Gap $w={5}><Handle /></Gap>
        <CanvasWrap>
          <Drawing />
          <ViewBar>
            <ViewIcon>
              <svg width="31" height="30" viewBox="0 0 31 30"><defs><radialGradient id="s" cx="35%" cy="30%"><stop offset="0" stopColor="#fff" /><stop offset="1" stopColor="#64707e" /></radialGradient></defs><ellipse cx="15" cy="16" rx="15" ry="8" fill="none" stroke="#5f6b78" strokeWidth="2" /><circle cx="15" cy="15" r="12" fill="url(#s)" /><circle cx="25" cy="8" r="6" fill="url(#s)" /></svg>
            </ViewIcon>
            <ViewIcon $mt={8}><Cube face="none" label="3D" /></ViewIcon>
            <ViewIcon $mt={6}><Cube face="#d3e6fc" /></ViewIcon>
            <ViewCaret $mt={8} />
            <ViewIcon $mt={8}><Cube face="none" /></ViewIcon>
            <ViewCaret $mt={8} />
            <ViewIcon $mt={6}>
              <svg width="30" height="30" viewBox="0 0 30 30" fill="none" stroke="#3a4654" strokeWidth="2"><path d="M25 9 A12.500 12.500 0 1 0 27.500 16" /><path d="M19 9H27V2" strokeWidth="1.500" fill="#3a4654" /></svg>
            </ViewIcon>
            <ViewCaret $mt={7} />
            <ViewRule />
            <ViewIcon $mt={4}>
              <svg width="31" height="30" viewBox="0 0 31 30" fill="none" stroke="#3a4654"><rect x="1" y="2" width="29" height="27" rx="1" fill="#8594a6" /><path d="M1 7H30" /><path d="M15.500 9V27" stroke="#222" /><path d="M5 11h3v3H5zM5 17h3v3H5zM5 23h3v3H5zM19 11h3v3h-3zM19 17h3v3h-3zM19 23h3v3h-3zM10 12.500h3M10 18.500h3M10 24.500h3M24 12.500h3M24 18.500h3M24 24.500h3" stroke="#222" /></svg>
            </ViewIcon>
          </ViewBar>
        </CanvasWrap>
        <Gap $w={6}><Handle /></Gap>
        <RightPanel>
          <Strip />
          <RightTitle>显示设置</RightTitle>
          <RTabs><RTab $on>图元显示</RTab><RTab>楼层显示</RTab></RTabs>
          <RTable>
            <RHead><HeadCell>图层构件</HeadCell><HeadCell>显示图元</HeadCell><HeadCell $on>显示名称</HeadCell></RHead>
            {layers.map((l, i) => (
              <RRow key={i}>
                <RName $child={l.kind !== "group"}>
                  {l.kind === "group" ? <Minus $ml={17} /> : <Guide $ml={23} $w={21} $last={l.kind === "last"} />}
                  <PropName $ml={8}>{l.name}</PropName>
                </RName>
                <RCheck><Check state={l.st} /></RCheck>
                <RCheck $focus={l.focus}><Check state="off" /></RCheck>
              </RRow>
            ))}
          </RTable>
          <RestoreRow><Restore>恢复默认设置</Restore></RestoreRow>
        </RightPanel>
      </Main>
      <Status>
        <StatusCell $w={331} $ml={3} $wide>X = -3057 Y = 5030</StatusCell>
        <StatusCell $w={104}>层高： 3</StatusCell>
        <StatusCell $w={166}>标高： 2.88~5.88</StatusCell>
        <StatusCell $w={129}>0</StatusCell>
        <StatusCell $w={130}>隐藏： 0</StatusCell>
        <StatusBtns>
          <SBtn $w={31} $ml={0}>
            <svg width="22" height="24" viewBox="0 0 22 24" fill="none" stroke="#555" strokeWidth="1.300"><path d="M3 3V21H20M3 15H9V21" /></svg>
          </SBtn>
          <SBtn $w={44} $ml={4} $on>
            <svg width="20" height="24" viewBox="0 0 20 24" fill="none"><rect x="3" y="5" width="16" height="16" stroke="#5b9fe6" strokeWidth="1.500" /><rect x="1" y="2" width="5" height="5" fill="#f5a050" /></svg>
            <Caret />
          </SBtn>
          <SBtn $w={32} $ml={7}>
            <svg width="22" height="24" viewBox="0 0 22 24" fill="none" stroke="#999"><path d="M2 3L20 21M20 3L2 21" /></svg>
          </SBtn>
          <SBtn $w={45} $ml={7}>
            <svg width="22" height="24" viewBox="0 0 22 24" fill="none" stroke="#555" strokeWidth="1.300"><path d="M2 21H21M3 20L18 5" /><circle cx="10" cy="13" r="2" fill="#333" /></svg>
            <Caret />
          </SBtn>
          <SBtn $w={45} $ml={4}>
            <svg width="22" height="24" viewBox="0 0 22 24" fill="none"><path d="M2 8H11M6.500 3V13" stroke="#555" strokeWidth="1.500" /><rect x="9" y="15" width="12" height="5" fill="#555" /></svg>
            <Caret />
          </SBtn>
          <SBtn $w={91} $ml={3}>跨图层选择</SBtn>
          <SBtn $w={76} $ml={4}>折线选择</SBtn>
        </StatusBtns>
        <Hint>按鼠标左键指定第一个角点，或拾取构件图元</Hint>
        <Fps>1000 FPS</Fps>
      </Status>
    </Page>
  </>
);

export default App;
